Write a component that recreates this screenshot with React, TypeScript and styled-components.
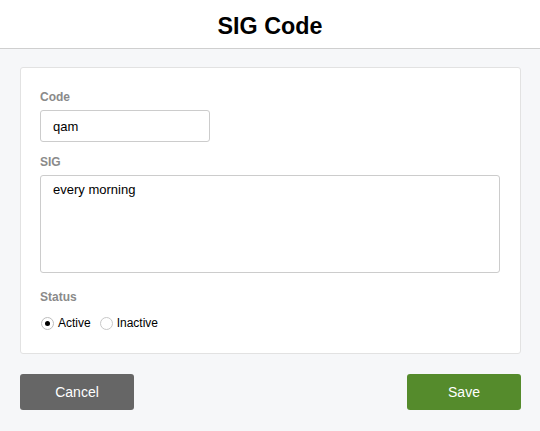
import React from "react";
import styled, { createGlobalStyle } from "styled-components";

const Global = createGlobalStyle`
  html, body { margin: 0; padding: 0; background: #f6f7f9; }
  body { font-family: "Liberation Sans", Arial, Helvetica, sans-serif; color: #000; }
  * { box-sizing: border-box; }
`;

const Page = styled.div`
  width: 540px;
  height: 431px;
  background: #f6f7f9;
  display: flex;
  flex-direction: column;
`;

const Header = styled.header`
  height: 49px;
  background: #fff;
  border-bottom: 1px solid #cfcfcf;
  display: flex;
  align-items: center;
  justify-content: center;
`;

const Title = styled.h1`
  margin: 0;
  font-size: 23.3px;
  font-weight: 700;
  line-height: 1;
  padding-top: 6px;
`;

const Main = styled.main`
  padding: 18px 19px 0 20px;
  display: flex;
  flex-direction: column;
  gap: 20px;
`;

const Card = styled.section`
  background: #fff;
  border: 1px solid #e2e2e2;
  border-radius: 3px;
  padding: 22px 20px 22px 19px;
  display: flex;
  flex-direction: column;
`;

const Label = styled.label<{ $gap?: number }>`
  display: block;
  font-size: 12px;
  font-weight: 700;
  color: #8a8a8a;
  line-height: 14px;
  margin-top: ${(p) => p.$gap ?? 0}px;
  margin-bottom: 6px;
`;

const TextInput = styled.input`
  width: 170px;
  height: 32px;
  border: 1px solid #cccccc;
  border-radius: 3px;
  padding: 0 12px;
  font-family: inherit;
  font-size: 13px;
  color: #000;
  outline: none;
`;

const TextArea = styled.textarea`
  width: 460px;
  height: 98px;
  border: 1px solid #cccccc;
  border-radius: 3px;
  padding: 6px 12px;
  font-family: inherit;
  font-size: 13px;
  line-height: 16px;
  color: #000;
  resize: none;
  outline: none;
  display: block;
`;

const RadioRow = styled.div`
  display: flex;
  align-items: center;
  gap: 9px;
  margin: 5px 0 0 1px;
`;

const RadioOption = styled.label`
  display: flex;
  align-items: center;
  gap: 4px;
  font-size: 12px;
  line-height: 16px;
  color: #000;
`;

const RadioDot = styled.span<{ $checked?: boolean }>`
  width: 13px;
  height: 13px;
  border-radius: 50%;
  border: 1px solid ${(p) => (p.$checked ? "#bdbdbd" : "#c8c8c8")};
  background: #fff;
  display: inline-flex;
  align-items: center;
  justify-content: center;
  &::after {
    content: "";
    width: 5px;
    height: 5px;
    border-radius: 50%;
    background: ${(p) => (p.$checked ? "#000" : "transparent")};
  }
`;

const Actions = styled.div`
  display: flex;
  justify-content: space-between;
`;

const Button = styled.button<{ $variant: "cancel" | "save" }>`
  width: 114px;
  height: 36px;
  border: none;
  border-radius: 3px;
  color: #fff;
  font-family: inherit;
  font-size: 14px;
  background: ${(p) => (p.$variant === "save" ? "#558b2c" : "#666666")};
`;

export default function App() {
  return (
    <Page>
      <Global />
      <Header>
        <Title>SIG Code</Title>
      </Header>
      <Main>
        <Card>
          <Label>Code</Label>
          <TextInput defaultValue="qam" />
          <Label $gap={13}>SIG</Label>
          <TextArea defaultValue="every morning" />
          <Label $gap={17}>Status</Label>
          <RadioRow>
            <RadioOption>
              <RadioDot $checked />
              Active
            </RadioOption>
            <RadioOption>
              <RadioDot />
              Inactive
            </RadioOption>
          </RadioRow>
        </Card>
        <Actions>
          <Button $variant="cancel">Cancel</Button>
          <Button $variant="save">Save</Button>
        </Actions>
      </Main>
    </Page>
  );
}
